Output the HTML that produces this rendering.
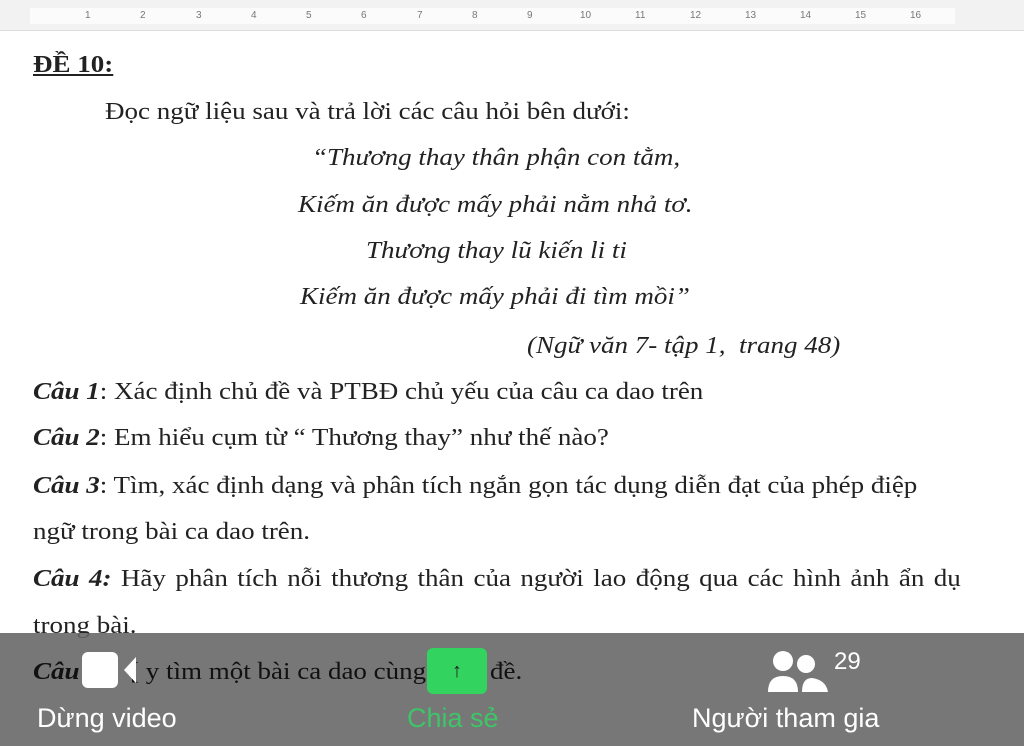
<!DOCTYPE html>
<html><head><meta charset="utf-8"><style>
body{margin:0;width:1024px;height:746px;overflow:hidden;background:#fff;position:relative;font-family:"Liberation Serif",serif;color:#222}
.ruler{position:absolute;left:0;top:0;width:1024px;height:30px;background:#f2f2f2;border-bottom:1px solid #ddd}
.rbar{position:absolute;left:30px;top:8px;width:925px;height:16px;background:#fbfbfb;font:10px "Liberation Sans",sans-serif;color:#777}
.rbar span{position:absolute;top:2px}
.t{position:absolute;font-size:24px;white-space:nowrap;transform:scaleX(1.125);transform-origin:0 0}
.i{font-style:italic}
.bar{position:absolute;left:0;top:633px;width:1024px;height:113px;background:rgba(100,100,100,.88)}
.lab{position:absolute;font-family:"Liberation Sans",sans-serif;font-size:27px;white-space:nowrap;top:703px}
</style></head><body>
<div class="ruler"><div class="rbar">
<span style="left:55px">1</span><span style="left:110px">2</span><span style="left:166px">3</span><span style="left:221px">4</span><span style="left:276px">5</span><span style="left:331px">6</span><span style="left:387px">7</span><span style="left:442px">8</span><span style="left:497px">9</span><span style="left:550px">10</span><span style="left:605px">11</span><span style="left:660px">12</span><span style="left:715px">13</span><span style="left:770px">14</span><span style="left:825px">15</span><span style="left:880px">16</span>
</div></div>
<div class="t" style="left:33px;top:52px;font-weight:bold;text-decoration:underline">ĐỀ 10:</div>
<div class="t" style="left:105px;top:99px">Đọc ngữ liệu sau và trả lời các câu hỏi bên dưới:</div>
<div class="t i" style="left:312px;top:145px">“Thương thay thân phận con tằm,</div>
<div class="t i" style="left:298px;top:192px">Kiếm ăn được mấy phải nằm nhả tơ.</div>
<div class="t i" style="left:366px;top:238px">Thương thay lũ kiến li ti</div>
<div class="t i" style="left:300px;top:284px">Kiếm ăn được mấy phải đi tìm mồi”</div>
<div class="t i" style="left:527px;top:333px">(Ngữ văn 7- tập 1,&nbsp; trang 48)</div>
<div class="t" style="left:33px;top:379px"><b><i>Câu 1</i></b>: Xác định chủ đề và PTBĐ chủ yếu của câu ca dao trên</div>
<div class="t" style="left:33px;top:425px"><b><i>Câu 2</i></b>: Em hiểu cụm từ “ Thương thay” như thế nào?</div>
<div class="t" style="left:33px;top:473px"><b><i>Câu 3</i></b>: Tìm, xác định dạng và phân tích ngắn gọn tác dụng diễn đạt của phép điệp</div>
<div class="t" style="left:33px;top:519px">ngữ trong bài ca dao trên.</div>
<div class="t" style="left:33px;top:566px;word-spacing:2.4px"><b><i>Câu 4:</i></b> Hãy phân tích nỗi thương thân của người lao động qua các hình ảnh ẩn dụ</div>
<div class="t" style="left:33px;top:613px">trong bài.</div>
<div class="bar"></div>
<div class="t" style="left:33px;top:659px;color:#111"><b><i>Câu</i></b></div>
<div class="t" style="left:130px;top:659px;color:#111">[ y tìm một bài ca dao cùng</div>
<div class="t" style="left:490px;top:659px;color:#111">đề.</div>
<div style="position:absolute;left:82px;top:652px;width:36px;height:36px;background:#fff;border-radius:6px"></div>
<div style="position:absolute;left:124px;top:657px;width:0;height:0;border-top:13px solid transparent;border-bottom:13px solid transparent;border-right:12px solid #fff"></div>
<div style="position:absolute;left:427px;top:648px;width:60px;height:46px;background:#33d35f;border-radius:6px;color:#222;font-size:20px;text-align:center;line-height:46px">↑</div>
<div class="lab" style="left:37px;color:#fff">Dừng video</div>
<div class="lab" style="left:407px;color:#3fc468">Chia sẻ</div>
<div class="lab" style="left:692px;color:#fff">Người tham gia</div>
<div style="position:absolute;left:834px;top:648px;font:24px 'Liberation Sans',sans-serif;color:#fff">29</div>
<svg style="position:absolute;left:766px;top:650px" width="64" height="46" viewBox="0 0 64 46"><circle cx="17" cy="11" r="10" fill="#fff"/><circle cx="40" cy="14" r="9" fill="#fff"/><path d="M2 42 Q2 26 17 26 Q32 26 32 42 Z" fill="#fff"/><path d="M36 42 Q36 28 46 28 Q60 30 62 42 Z" fill="#fff"/></svg>
</body></html>
